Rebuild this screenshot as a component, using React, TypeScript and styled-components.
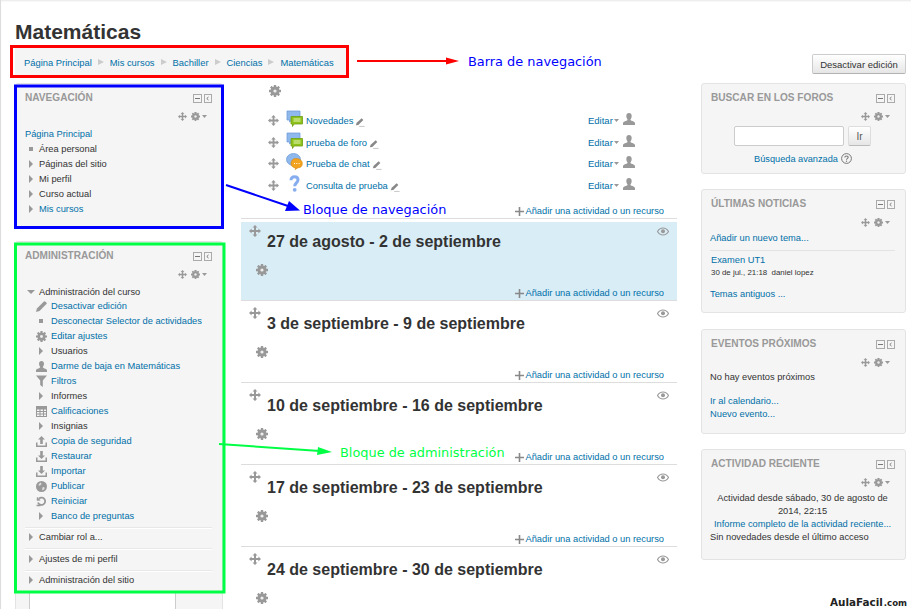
import React from "react";
import styled, { createGlobalStyle } from "styled-components";

const Global = createGlobalStyle`
  html, body { margin: 0; padding: 0; background: #fff; }
  body { font-family: "Liberation Sans", Arial, sans-serif; font-size: 9.3px; color: #333; }
  * { box-sizing: border-box; }
`;

const G = "#999";

const Move = ({ s = 11 }: { s?: number }) => (
  <svg width={s} height={s} viewBox="0 0 12 12" fill={G}>
    <path d="M6 0 8.5 2.6H7V5h2.4V3.5L12 6 9.4 8.5V7H7v2.4h1.5L6 12 3.5 9.4H5V7H2.6v1.5L0 6l2.6-2.5V5H5V2.6H3.5Z" />
  </svg>
);
const Gear = ({ s = 12 }: { s?: number }) => (
  <svg width={s} height={s} viewBox="0 0 12 12" fill={G}>
    {[0, 45, 90, 135].map((a) => (
      <rect key={a} x="4.8" y="0" width="2.4" height="12" rx=".3" transform={`rotate(${a} 6 6)`} />
    ))}
    <circle cx="6" cy="6" r="3.4" fill="none" stroke={G} strokeWidth="2.2" />
    <circle cx="6" cy="6" r="1.6" fill="#eee" />
  </svg>
);
const Pencil = ({ s = 11 }: { s?: number }) => (
  <svg width={s} height={s} viewBox="0 0 12 12" fill={G}>
    <path d="M0 12 1 8.2 8.6.6a1 1 0 0 1 1.4 0l1.4 1.4a1 1 0 0 1 0 1.4L3.8 11Z" />
  </svg>
);
const SmallPencil = () => (
  <svg width="10" height="10" viewBox="0 0 12 12">
    <path d="M1 10 2 7 8 1.5 10 3.5 4 9.5Z" fill="#888" />
    <path d="M5 11.3h6.5" stroke="#bbb" strokeWidth="1" />
  </svg>
);
const Person = ({ s = 12 }: { s?: number }) => (
  <svg width={s} height={s} viewBox="0 0 12 12" fill={G}>
    <path d="M6 0c1.7 0 2.7 1.2 2.7 3S7.8 6 7.4 6.8c0 1 3.6 1.4 4.6 3V12H0V9.8c1-1.6 4.6-2 4.6-3C4.2 6 3.3 4.8 3.3 3S4.3 0 6 0Z" />
  </svg>
);
const Filter = () => (
  <svg width="11" height="12" viewBox="0 0 11 12" fill={G}>
    <path d="M0 .5h11L6.8 5.5V12L4.2 10V5.5Z" />
  </svg>
);
const Grades = () => (
  <svg width="11" height="11" viewBox="0 0 11 11">
    <rect width="11" height="11" fill={G} />
    <path d="M1 3.5h2.5V5H1Zm3.500 0H7V5H4.500Zm3.500 0h2V5H8ZM1 6h2.500v1.500H1Zm3.500 0H7v1.500H4.500ZM8 6h2v1.500H8ZM1 8.500h2.500V10H1Zm3.500 0H7V10H4.500Zm3.500 0h2V10H8Z" fill="#f5f5f5" />
  </svg>
);
const Tray = ({ up }: { up?: boolean }) => (
  <svg width="11" height="11" viewBox="0 0 11 11" fill={G}>
    <path d="M0 6.5h1.5v3h8v-3H11V11H0Z" />
    {up ? <path d="M5.5 0 9 3.6H6.8V8H4.2V3.6H2Z" /> : <path d="M4.2 0h2.6v4.4H9L5.5 8 2 4.4h2.200Z" />}
  </svg>
);
const Globe = () => (
  <svg width="11" height="11" viewBox="0 0 11 11">
    <circle cx="5.5" cy="5.5" r="5.5" fill={G} />
    <path d="M5 1.5C3.5 2 2.5 3 2.5 4.5 4 5 5 4 5.5 3ZM7 6c1 0 2 .5 1.5 2L6.500 9.500C6 8.500 6 7 7 6Z" fill="#ddd" />
  </svg>
);
const Reset = () => (
  <svg width="11" height="11" viewBox="0 0 11 11" fill="none" stroke={G} strokeWidth="1.8">
    <path d="M2 6.5a3.7 3.7 0 1 0 1-4" />
    <path d="M.5 9.5h4" strokeWidth="1.5" />
    <path d="M1.2 1.2 1 4.5l3.200-.2Z" fill={G} strokeWidth=".5" />
  </svg>
);
const Eye = () => (
  <svg width="12" height="9" viewBox="0 0 12 9">
    <path d="M.5 4.5C2 2 4 1 6 1s4 1 5.500 3.500C10 7 8 8 6 8S2 7 .5 4.5Z" fill="none" stroke={G} strokeWidth="1.2" />
    <circle cx="6" cy="4.3" r="2" fill={G} />
  </svg>
);
const Help = () => (
  <svg width="11" height="11" viewBox="0 0 11 11" fill="none" stroke="#777">
    <circle cx="5.5" cy="5.5" r="4.9" />
    <path d="M3.8 4.4C3.8 3.3 4.6 3 5.5 3s1.7.5 1.7 1.3C7.2 5.4 5.500 5.400 5.500 6.800" strokeWidth="1.1" />
    <path d="M5.5 7.6v1.2" strokeWidth="1.1" />
  </svg>
);
const Plus = () => (
  <svg width="9" height="9" viewBox="0 0 9 9" fill="#888">
    <path d="M3.7 0h1.600v3.700H9v1.600H5.300V9H3.700V5.300H0V3.700h3.700Z" />
  </svg>
);
const Caret = () => (
  <svg width="5" height="3" viewBox="0 0 5 3" fill={G}>
    <path d="M0 0h5L2.500 3Z" />
  </svg>
);
const BoxMinus = () => (
  <svg width="9" height="9" viewBox="0 0 9 9">
    <rect x=".5" y=".5" width="8" height="8" fill="#f5f5f5" stroke="#aaa" />
    <path d="M2 4.5h5" stroke="#777" strokeWidth="1" />
  </svg>
);
const BoxDock = () => (
  <svg width="8" height="9" viewBox="0 0 8 9">
    <rect x=".5" y=".5" width="7" height="8" fill="#f5f5f5" stroke="#aaa" />
    <path d="M4.5 3 2.8 4.500 4.500 6" fill="none" stroke="#777" />
  </svg>
);
const ForumIcon = () => (
  <svg width="17" height="17" viewBox="0 0 17 17">
    <path d="M1 1h13v9H6L3.500 12V10H1Z" fill="#8fb8ec" stroke="#6f9fdc" strokeWidth=".8" />
    <path d="M5 6.500h11.500v7.500H8L6.500 16.500V14H5Z" fill="#8ec21a" stroke="#6f9f10" strokeWidth=".8" />
    <path d="M7.500 9h7M7.500 11h7" stroke="#e6f5bb" strokeWidth="1.1" />
  </svg>
);
const ChatIcon = () => (
  <svg width="17" height="17" viewBox="0 0 17 17">
    <ellipse cx="7.5" cy="6.5" rx="7" ry="6" fill="#8fb8ec" stroke="#6f9fdc" strokeWidth=".8" />
    <path d="M9.500 5.500c4 0 6.800 1.800 6.800 5s-2 4.200-4 4.200L9 16.500l.5-1.800c-2.500 0-4.500-1.500-4.500-4.200s2-5 4.500-5Z" fill="#f2a31f" stroke="#d9860d" strokeWidth=".6" />
    <path d="M8 10.500h.9M10.300 10.500h.9M12.600 10.500h.9" stroke="#fff" strokeWidth="1.1" />
  </svg>
);
const ChoiceIcon = () => (
  <svg width="17" height="17" viewBox="0 0 17 17" fill="none">
    <path d="M5 5.200C5 3 6.500 1.800 8.500 1.800S12 3 12 4.800c0 3-3.300 3.200-3.300 6.400" stroke="#86aeee" strokeWidth="3" />
    <circle cx="8.700" cy="14.800" r="1.900" fill="#86aeee" />
  </svg>
);

const Page = styled.div`
  position: relative;
  width: 911px;
  height: 609px;
  overflow: hidden;
  padding-left: 15px;
  border-left: 1px solid #ddd;
  box-shadow: inset 0 2px 2px -1px #e8e8e8;
`;
const Heading = styled.h1`
  margin: 0 0 0 -1px;
  padding-top: 21px;
  height: 48px;
  font-size: 21px;
  line-height: 22px;
  font-weight: 700;
  color: #333;
`;
const CrumbRow = styled.div`
  display: flex;
  align-items: flex-start;
  justify-content: space-between;
  width: 891px;
  height: 35px;
  margin-left: -1px;
`;
const Crumbs = styled.nav`
  display: flex;
  align-items: center;
  gap: 6px;
  height: 28px;
  width: 333px;
  padding-left: 9px;
  background: #f5f5f5;
`;
const CrumbLink = styled.a`
  color: #0070a8;
  font-size: 9.4px;
  white-space: nowrap;
`;
const CrumbSep = styled.span`
  width: 0;
  height: 0;
  border-left: 6px solid #ccc;
  border-top: 3.5px solid transparent;
  border-bottom: 3.5px solid transparent;
`;
const EditButton = styled.button`
  width: 94px;
  height: 20px;
  margin-top: 6px;
  border: 1px solid #ccc;
  border-bottom-color: #b3b3b3;
  border-radius: 2px;
  background: linear-gradient(#fff, #e6e6e6);
  font: 9.5px "Liberation Sans", Arial, sans-serif;
  color: #333;
  padding: 0;
`;
const Columns = styled.div`
  display: flex;
  align-items: flex-start;
  margin-left: -1px;
`;
const LeftCol = styled.aside`
  width: 208px;
  flex: none;
  display: flex;
  flex-direction: column;
  gap: 13px;
`;
const Center = styled.main`
  width: 436px;
  flex: none;
  margin: 0 24px 0 18px;
`;
const RightCol = styled.aside`
  width: 205px;
  flex: none;
  display: flex;
  flex-direction: column;
`;
const Block = styled.section<{ $h: number; $mb?: number }>`
  height: ${(p) => p.$h}px;
  margin-bottom: ${(p) => p.$mb ?? 0}px;
  flex: none;
  background: #f5f5f5;
  border: 1px solid #e3e3e3;
  border-radius: 3px;
  padding: 8px 10px 0 9px;
`;
const BlockHead = styled.header`
  display: flex;
  justify-content: space-between;
  align-items: center;
  height: 11px;
`;
const BlockTitle = styled.h2`
  margin: 0;
  font-size: 10.1px;
  font-weight: 700;
  color: #999;
  text-transform: uppercase;
  white-space: nowrap;
`;
const BoxIcons = styled.div`
  display: flex;
  gap: 2px;
  padding-top: 1px;
`;
const BlockTools = styled.div`
  display: flex;
  justify-content: flex-end;
  align-items: center;
  gap: 2px;
  height: 12px;
  margin-top: 7px;
  padding-right: 5px;
  & svg:first-child { margin-right: 2px; }
`;
const NavLink = styled.a`
  display: block;
  height: 14px;
  line-height: 15px;
  margin-top: 5px;
  color: #0070a8;
  white-space: nowrap;
`;
const TreeRow = styled.div<{ $depth?: boolean; $h?: number }>`
  display: flex;
  align-items: center;
  height: ${(p) => p.$h ?? 15}px;
  margin-left: ${(p) => (p.$depth ? 10 : 1)}px;
`;
const Lead = styled.span<{ $w: number }>`
  display: flex;
  width: ${(p) => p.$w}px;
  justify-content: center;
  flex: none;
  margin-right: 4px;
`;
const RowText = styled.span<{ $link?: boolean }>`
  color: ${(p) => (p.$link ? "#0070a8" : "#333")};
  white-space: nowrap;
`;
const TriRight = styled.i`
  width: 0;
  height: 0;
  border-left: 4px solid #999;
  border-top: 4px solid transparent;
  border-bottom: 4px solid transparent;
`;
const TriDown = styled.i`
  width: 0;
  height: 0;
  border-top: 4px solid #999;
  border-left: 4px solid transparent;
  border-right: 4px solid transparent;
`;
const Bullet = styled.i`
  width: 4px;
  height: 4px;
  background: #999;
`;
const Divider = styled.hr`
  margin: 4px 0 3px;
  border: 0;
  border-top: 1px solid #e8e8e8;
  box-shadow: 0 1px 0 #fff;
`;
const Tree = styled.div`
  margin-top: 3px;
`;
const AdminTree = styled.div`
  margin-top: 4.5px;
  & > hr:first-of-type { margin-top: 3px; }
`;
const CalendarStub = styled.div`
  height: 40px;
  background: #f5f5f5;
  padding-left: 13px;
  margin-top: -13px;
  border-left: 1px solid #e3e3e3;
  border-right: 1px solid #e3e3e3;
`;
const CalendarInner = styled.div`
  width: 147px;
  height: 100%;
  background: #fff;
  border-left: 1px solid #ccc;
  border-right: 1px solid #ccc;
`;

const TopGear = styled.div`
  height: 27px;
  padding: 2px 0 0 28px;
`;
const ActivityRow = styled.div`
  display: flex;
  align-items: center;
  height: 21.5px;
  padding-left: 27px;
`;
const ActivityMain = styled.div`
  display: flex;
  align-items: center;
  width: 320px;
`;
const ActivityIconWrap = styled.span`
  display: flex;
  margin: -4px 3px 0 7px;
`;
const ActivityLink = styled.a`
  color: #0070a8;
  font-size: 9.4px;
  margin-right: 2px;
  white-space: nowrap;
`;
const PencilWrap = styled.span`
  display: flex;
  margin-top: 3px;
`;
const EditMenu = styled.div`
  display: flex;
  align-items: center;
  gap: 1px;
  color: #0070a8;
  font-size: 9.5px;
  & > svg:last-child { margin-left: 3px; margin-top: -3px; }
`;
const AddRow = styled.div<{ $top?: number; $pr?: number }>`
  display: flex;
  justify-content: flex-end;
  align-items: center;
  gap: 1px;
  height: 12px;
  padding-right: ${(p) => p.$pr ?? 13}px;
  margin-top: ${(p) => p.$top ?? 0}px;
  font-size: 9.3px;
  color: #0070a8;
  white-space: nowrap;
`;
const Section = styled.article<{ $hi?: boolean }>`
  height: 82px;
  border-bottom: 1px solid #ddd;
  background: ${(p) => (p.$hi ? "#d9edf7" : "transparent")};
  padding: 6px 8px 0;
  &:first-child { height: 79px; padding-top: 3px; }
`;
const SectionHead = styled.header`
  display: flex;
  align-items: flex-start;
`;
const SectionTitle = styled.h3`
  flex: 1;
  margin: 8px 0 0 6px;
  font-size: 16px;
  line-height: 18px;
  font-weight: 700;
  color: #333;
`;
const SectionEye = styled.span`
  display: flex;
  margin-top: 2px;
`;
const SectionGear = styled.div`
  margin: 13px 0 6px 7px;
  height: 17px;
`;
const FirstRule = styled.div`
  height: 1px;
  background: #ddd;
  margin: 1px 0 3px;
`;
const SearchForm = styled.form`
  display: flex;
  justify-content: center;
  gap: 4px;
  margin: 4px 0 0 -1px;
`;
const SearchInput = styled.input`
  width: 110px;
  height: 20px;
  border: 1px solid #ccc;
  border-radius: 2px;
  background: #fff;
`;
const GoButton = styled.button`
  width: 23px;
  height: 20px;
  padding: 0;
  border: 1px solid #ddd;
  border-bottom-color: #bbb;
  border-radius: 2px;
  background: linear-gradient(#fff, #e6e6e6);
  font: 10px "Liberation Sans", Arial, sans-serif;
  color: #555;
`;
const AdvLine = styled.div`
  display: flex;
  justify-content: center;
  align-items: center;
  gap: 3px;
  margin-top: 7px;
  color: #0070a8;
  font-size: 9.2px;
`;
const NewsMeta = styled.div`
  padding-left: 1px;
  font-size: 7.9px;
  line-height: 13px;
  margin-top: -1px;
  color: #333;
`;
const NewsItem = styled.a`
  display: block;
  padding-left: 1px;
  height: 14px;
  line-height: 14px;
  color: #0070a8;
`;
const NewsRule = styled.hr`
  margin: 5px 0 2px;
  border: 0;
  border-top: 1px solid #e3e3e3;
`;
const BlockBody = styled.div<{ $top: number }>`
  margin: ${(p) => p.$top}px 0 0 -1px;
`;
const BlockText = styled.p<{ $center?: boolean }>`
  margin: 0;
  line-height: 13px;
  text-align: ${(p) => (p.$center ? "center" : "left")};
  color: #333;
`;
const BlockA = styled.a<{ $center?: boolean; $top?: number }>`
  display: block;
  margin-top: ${(p) => p.$top ?? 0}px;
  line-height: 13px;
  text-align: ${(p) => (p.$center ? "center" : "left")};
  color: #0070a8;
  white-space: nowrap;
`;

const Overlay = styled.svg`
  position: absolute;
  left: -1px;
  top: 0;
  width: 911px;
  height: 609px;
  pointer-events: none;
`;
const Note = styled.span<{ $x: number; $y: number; $c: string }>`
  position: absolute;
  left: ${(p) => p.$x}px;
  top: ${(p) => p.$y}px;
  color: ${(p) => p.$c};
  font-family: "DejaVu Sans", sans-serif;
  font-size: 12.9px;
  line-height: 15px;
  white-space: nowrap;
`;
const Brand = styled.span`
  position: absolute;
  right: 4px;
  bottom: 0;
  font-family: "DejaVu Sans", sans-serif;
  font-weight: 700;
  font-size: 10.4px;
  line-height: 12px;
  color: #222;
  background: #fff;
  white-space: nowrap;
  & small { font-size: 8.6px; margin-left: 1px; }
`;

const BlockHeader = ({ title }: { title: string }) => (
  <>
    <BlockHead>
      <BlockTitle>{title}</BlockTitle>
      <BoxIcons>
        <BoxMinus />
        <BoxDock />
      </BoxIcons>
    </BlockHead>
    <BlockTools>
      <Move s={9} />
      <Gear s={9} />
      <Caret />
    </BlockTools>
  </>
);

const navRows: { t: string; link?: boolean; bullet?: boolean }[] = [
  { t: "Área personal", bullet: true },
  { t: "Páginas del sitio" },
  { t: "Mi perfil" },
  { t: "Curso actual" },
  { t: "Mis cursos", link: true },
];

const adminRows: { t: string; icon: React.ReactNode; link?: boolean }[] = [
  { t: "Desactivar edición", icon: <Pencil />, link: true },
  { t: "Desconectar Selector de actividades", icon: <Bullet />, link: true },
  { t: "Editar ajustes", icon: <Gear s={11} />, link: true },
  { t: "Usuarios", icon: <TriRight /> },
  { t: "Darme de baja en Matemáticas", icon: <Person s={11} />, link: true },
  { t: "Filtros", icon: <Filter />, link: true },
  { t: "Informes", icon: <TriRight /> },
  { t: "Calificaciones", icon: <Grades />, link: true },
  { t: "Insignias", icon: <TriRight /> },
  { t: "Copia de seguridad", icon: <Tray up />, link: true },
  { t: "Restaurar", icon: <Tray />, link: true },
  { t: "Importar", icon: <Tray />, link: true },
  { t: "Publicar", icon: <Globe />, link: true },
  { t: "Reiniciar", icon: <Reset />, link: true },
  { t: "Banco de preguntas", icon: <TriRight />, link: true },
];

const activities = [
  { t: "Novedades", icon: <ForumIcon /> },
  { t: "prueba de foro", icon: <ForumIcon /> },
  { t: "Prueba de chat", icon: <ChatIcon /> },
  { t: "Consulta de prueba", icon: <ChoiceIcon /> },
];

const sections = [
  "27 de agosto - 2 de septiembre",
  "3 de septiembre - 9 de septiembre",
  "10 de septiembre - 16 de septiembre",
  "17 de septiembre - 23 de septiembre",
  "24 de septiembre - 30 de septiembre",
];

const AddAction = ({ top, pr }: { top?: number; pr?: number }) => (
  <AddRow $top={top} $pr={pr}>
    <Plus />
    <span>Añadir una actividad o un recurso</span>
  </AddRow>
);

const RootRow = ({ label, open }: { label: string; open?: boolean }) => (
  <TreeRow $h={open ? 14 : 13.5}>
    <Lead $w={9}>{open ? <TriDown /> : <TriRight />}</Lead>
    <RowText>{label}</RowText>
  </TreeRow>
);

export default function App() {
  return (
    <Page>
      <Global />
      <Heading>Matemáticas</Heading>
      <CrumbRow>
        <Crumbs>
          <CrumbLink>Página Principal</CrumbLink>
          <CrumbSep />
          <CrumbLink>Mis cursos</CrumbLink>
          <CrumbSep />
          <CrumbLink>Bachiller</CrumbLink>
          <CrumbSep />
          <CrumbLink>Ciencias</CrumbLink>
          <CrumbSep />
          <CrumbLink>Matemáticas</CrumbLink>
        </Crumbs>
        <EditButton>Desactivar edición</EditButton>
      </CrumbRow>
      <Columns>
        <LeftCol>
          <Block $h={145}>
            <BlockHeader title="Navegación" />
            <Tree>
              <NavLink>Página Principal</NavLink>
              {navRows.map((r) => (
                <TreeRow key={r.t}>
                  <Lead $w={9}>{r.bullet ? <Bullet /> : <TriRight />}</Lead>
                  <RowText $link={r.link}>{r.t}</RowText>
                </TreeRow>
              ))}
            </Tree>
          </Block>
          <Block $h={352}>
            <BlockHeader title="Administración" />
            <AdminTree>
              <RootRow label="Administración del curso" open />
              {adminRows.map((r) => (
                <TreeRow key={r.t} $depth>
                  <Lead $w={12}>{r.icon}</Lead>
                  <RowText $link={r.link}>{r.t}</RowText>
                </TreeRow>
              ))}
              <Divider />
              <RootRow label="Cambiar rol a..." />
              <Divider />
              <RootRow label="Ajustes de mi perfil" />
              <Divider />
              <RootRow label="Administración del sitio" />
            </AdminTree>
          </Block>
          <CalendarStub>
            <CalendarInner />
          </CalendarStub>
        </LeftCol>

        <Center>
          <TopGear>
            <Gear />
          </TopGear>
          {activities.map((a) => (
            <ActivityRow key={a.t}>
              <ActivityMain>
                <Move />
                <ActivityIconWrap>{a.icon}</ActivityIconWrap>
                <ActivityLink>{a.t}</ActivityLink>
                <PencilWrap>
                  <SmallPencil />
                </PencilWrap>
              </ActivityMain>
              <EditMenu>
                Editar
                <Caret />
                <Person />
              </EditMenu>
            </ActivityRow>
          ))}
          <AddAction top={9} />
          <FirstRule />
          <div>
            {sections.map((s, i) => (
              <Section key={s} $hi={i === 0}>
                <SectionHead>
                  <Move s={12} />
                  <SectionTitle>{s}</SectionTitle>
                  <SectionEye>
                    <Eye />
                  </SectionEye>
                </SectionHead>
                <SectionGear>
                  <Gear />
                </SectionGear>
                {i < sections.length - 1 && <AddAction pr={5} />}
              </Section>
            ))}
          </div>
        </Center>

        <RightCol>
          <Block $h={91} $mb={15}>
            <BlockHeader title="Buscar en los foros" />
            <SearchForm>
              <SearchInput />
              <GoButton type="button">Ir</GoButton>
            </SearchForm>
            <AdvLine>
              Búsqueda avanzada <Help />
            </AdvLine>
          </Block>
          <Block $h={124} $mb={16}>
            <BlockHeader title="Últimas noticias" />
            <BlockBody $top={4}>
              <BlockA>Añadir un nuevo tema...</BlockA>
              <NewsRule />
              <NewsItem>Examen UT1</NewsItem>
              <NewsMeta>30 de jul., 21:18&nbsp; daniel lopez</NewsMeta>
              <BlockA $top={9}>Temas antiguos ...</BlockA>
            </BlockBody>
          </Block>
          <Block $h={105} $mb={15}>
            <BlockHeader title="Eventos próximos" />
            <BlockBody $top={3}>
              <BlockText>No hay eventos próximos</BlockText>
              <BlockA $top={11}>Ir al calendario...</BlockA>
              <BlockA>Nuevo evento...</BlockA>
            </BlockBody>
          </Block>
          <Block $h={111}>
            <BlockHeader title="Actividad reciente" />
            <BlockBody $top={4}>
              <BlockText $center>Actividad desde sábado, 30 de agosto de 2014, 22:15</BlockText>
              <BlockA $center>Informe completo de la actividad reciente...</BlockA>
              <BlockText>Sin novedades desde el último acceso</BlockText>
            </BlockBody>
          </Block>
        </RightCol>
      </Columns>

      <Overlay viewBox="0 0 911 609" fill="none">
        <rect x="11.5" y="46.5" width="336" height="30" stroke="#f00" strokeWidth="3" />
        <rect x="15.5" y="86" width="207" height="141.5" stroke="#00f" strokeWidth="3" />
        <rect x="15.5" y="244" width="208.5" height="348" stroke="#0f4" strokeWidth="3" />
        <path d="M357 61h91" stroke="#f00" strokeWidth="2" />
        <path d="M446 57.5 459 61l-13 3.500Z" fill="#f00" />
        <path d="M226 185 288 206" stroke="#00f" strokeWidth="2" />
        <path d="M285 211l15-.5-11-9.500Z" fill="#00f" />
        <path d="M219 444 320 451" stroke="#0f4" strokeWidth="2" />
        <path d="M318 447l14 5-15 3Z" fill="#0f4" />
      </Overlay>
      <Note $x={467} $y={54} $c="#0000ff">Barra de navegación</Note>
      <Note $x={302} $y={202} $c="#0000ff">Bloque de navegación</Note>
      <Note $x={339} $y={445} $c="#00ff44">Bloque de administración</Note>
      <Brand>
        AulaFacil<small>.com</small>
      </Brand>
    </Page>
  );
}
